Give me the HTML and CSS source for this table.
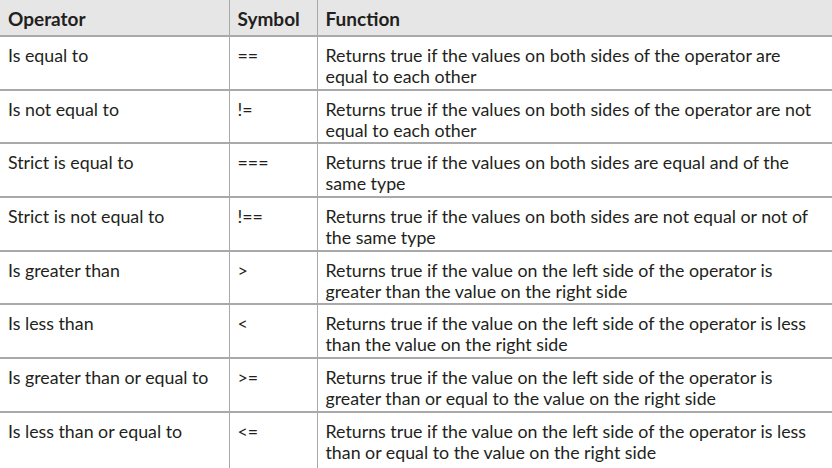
FILE: index.html
```html
<!DOCTYPE html>
<html>
<head>
<meta charset="utf-8">
<link rel="stylesheet" href="styles.css">
</head>
<body>
<table class="ops">
  <colgroup>
    <col class="c-op">
    <col class="c-sym">
    <col class="c-fn">
  </colgroup>
  <thead>
    <tr><th>Operator</th><th>Symbol</th><th>Function</th></tr>
  </thead>
  <tbody>
    <tr><td>Is equal to</td><td>==</td><td>Returns true if the values on both sides of the operator are<br>equal to each other</td></tr>
    <tr><td>Is not equal to</td><td>!=</td><td>Returns true if the values on both sides of the operator are not<br>equal to each other</td></tr>
    <tr><td>Strict is equal to</td><td>===</td><td>Returns true if the values on both sides are equal and of the<br>same type</td></tr>
    <tr><td>Strict is not equal to</td><td>!==</td><td>Returns true if the values on both sides are not equal or not of<br>the same type</td></tr>
    <tr><td>Is greater than</td><td>&gt;</td><td>Returns true if the value on the left side of the operator is<br>greater than the value on the right side</td></tr>
    <tr><td>Is less than</td><td>&lt;</td><td>Returns true if the value on the left side of the operator is less<br>than the value on the right side</td></tr>
    <tr><td>Is greater than or equal to</td><td>&gt;=</td><td>Returns true if the value on the left side of the operator is<br>greater than or equal to the value on the right side</td></tr>
    <tr class="last"><td>Is less than or equal to</td><td>&lt;=</td><td>Returns true if the value on the left side of the operator is less<br>than or equal to the value on the right side</td></tr>
  </tbody>
</table>
</body>
</html>
```
FILE: styles.css
```css
html, body {
  margin: 0;
  padding: 0;
  background: #ffffff;
}
body {
  width: 832px;
  height: 468px;
  overflow: hidden;
  font-family: Lato, "Liberation Sans", sans-serif;
  color: #231f20;
}
.ops {
  border-collapse: collapse;
  table-layout: fixed;
  width: 832px;
}
.c-op { width: 229px; }
.c-sym { width: 88px; }
.c-fn { width: 515px; }
.ops th, .ops td {
  text-align: left;
  vertical-align: top;
  border-left: 1px solid #a9a9a9;
  border-bottom: 2px solid #a9a9a9;
  padding: 0 0 0 8px;
  font-size: 17.8px;
  line-height: 21px;
}
.ops th:first-child, .ops td:first-child {
  border-left: none;
}
.ops th {
  background: #e6e6e6;
  font-weight: 700;
  font-size: 19px;
  height: 34px;
  vertical-align: middle;
  padding-top: 1px;
}
.ops th:last-child {
  border-right: 1px solid #cfcfcf;
}
.ops td {
  height: 43.7px;
  padding-top: 8px;
}
.ops tr.last td {
  border-bottom: none;
  height: 50px;
}
```
